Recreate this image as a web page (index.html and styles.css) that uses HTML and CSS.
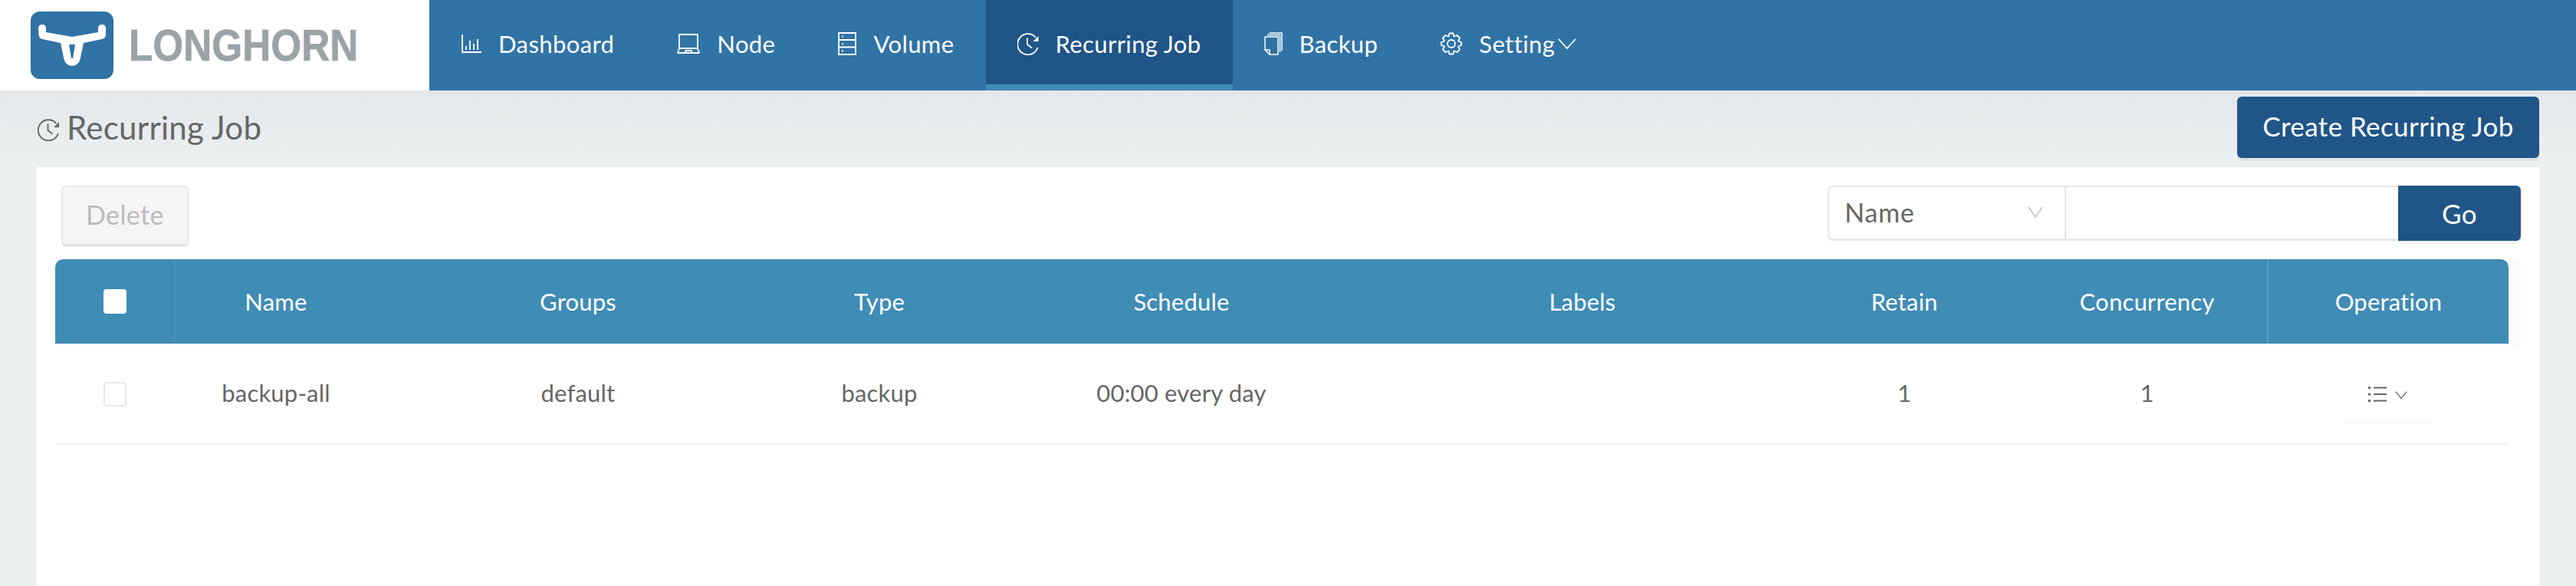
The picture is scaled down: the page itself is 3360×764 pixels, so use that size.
FILE: index.html
```html
<!DOCTYPE html>
<html lang="en">
<head>
<meta charset="utf-8">
<title>Longhorn - Recurring Job</title>
<link rel="stylesheet" href="styles.css">
</head>
<body>
<header class="topbar">
  <div class="brand">
    <svg class="brand-mark" viewBox="0 0 108 88" aria-hidden="true">
      <rect width="108" height="88" rx="12" fill="#3073a5"/>
      <path d="M10 22Q10 17 15 17Q20 17 20 22L20 27L54 33L88 27L88 22Q88 17 93 17Q98 17 98 22L98 30Q98 35 93 36L69 41L65 60Q63 71 54 71Q45 71 43 60L39 41L15 36Q11 35 10.500 30Z" fill="#fff"/>
      <path d="M50 43H58L55 61H53Z" fill="#3073a5"/>
    </svg>
    <span class="brand-name">LONGHORN</span>
  </div>
  <nav class="nav">
    <a class="nav-item">
      <svg class="nav-icon icon-dash" viewBox="0 0 26 24" aria-hidden="true"><path d="M1 0V23H26M6 20V15M11 20V8M16 20V12M21 20V6" fill="none" stroke="#fff" stroke-width="1.800"/></svg>
      Dashboard
    </a>
    <a class="nav-item">
      <svg class="nav-icon icon-node" viewBox="0 0 30 26" aria-hidden="true"><path d="M3 19V1H27V19M1 25L3 19H27L29 25ZM11 24.500V22H19V24.500" fill="none" stroke="#fff" stroke-width="1.800" stroke-linejoin="round"/></svg>
      Node
    </a>
    <a class="nav-item">
      <svg class="nav-icon icon-volume" viewBox="0 0 24 30" aria-hidden="true"><path d="M1 1H23V29H1ZM1 10H23M1 19.500H23M5 5.500H7M5 15H7M5 24.500H7" fill="none" stroke="#fff" stroke-width="1.800"/></svg>
      Volume
    </a>
    <a class="nav-item is-active">
      <svg class="nav-icon icon-clock" viewBox="0 0 28 30" aria-hidden="true"><path d="M24 7A13.500 13.500 0 1 0 26.500 20M13 7.500V16L19 20.500" fill="none" stroke="#fff" stroke-width="1.800"/><path d="M27.500 5V12H20.500Z" fill="#fff"/></svg>
      Recurring Job
    </a>
    <a class="nav-item">
      <svg class="nav-icon icon-backup" viewBox="0 0 24 30" aria-hidden="true"><path d="M1 6H18V29H7L1 23ZM1 23H7V29M4 3.500H20.500V26M6.500 1H23V24" fill="none" stroke="#fff" stroke-width="1.500" stroke-linejoin="round"/></svg>
      Backup
    </a>
    <a class="nav-item">
      <svg class="nav-icon icon-gear" viewBox="0 0 28 30" aria-hidden="true"><circle cx="14" cy="15" r="5" fill="none" stroke="#fff" stroke-width="1.800"/><path d="M11.500 1.500H16.500L17.500 5.500L21.500 4L25 7.500L23 11.500L27 13V17L23 18.500L25 22.500L21.500 26L17.500 24.500L16.500 28.500H11.500L10.500 24.500L6.500 26L3 22.500L5 18.500L1 17V13L5 11.500L3 7.500L6.500 4L10.500 5.500Z" fill="none" stroke="#fff" stroke-width="1.800" stroke-linejoin="round"/></svg>
      <span class="setting-label">Setting<svg class="nav-chevron" viewBox="0 0 24 14" aria-hidden="true"><path d="M1 1L12 13L23 1" fill="none" stroke="#fff" stroke-width="1.800"/></svg></span>
    </a>
  </nav>
</header>
<main class="page">
  <div class="page-head">
    <h1 class="page-title">
      <svg class="title-icon" viewBox="0 0 28 30" aria-hidden="true"><path d="M24 7A13.500 13.500 0 1 0 26.500 20M13 7.500V16L19 20.500" fill="none" stroke="#666" stroke-width="1.900"/><path d="M27.500 5V12H20.500Z" fill="#666"/></svg>
      Recurring Job
    </h1>
    <button class="btn btn-primary btn-create">Create Recurring Job</button>
  </div>
  <section class="panel">
    <div class="toolbar">
      <button class="btn btn-disabled">Delete</button>
      <div class="filter">
        <div class="filter-select">
          <span>Name</span>
          <svg class="select-arrow" viewBox="0 0 20 15" aria-hidden="true"><path d="M1 1L10 14L19 1" fill="none" stroke="#bfbfbf" stroke-width="1.500"/></svg>
        </div>
        <div class="filter-input"></div>
        <button class="btn btn-primary btn-go">Go</button>
      </div>
    </div>
    <div class="table">
      <div class="table-row table-head">
        <div class="cell cell-divider-right"><span class="checkbox checkbox-head"></span></div>
        <div class="cell">Name</div>
        <div class="cell">Groups</div>
        <div class="cell">Type</div>
        <div class="cell">Schedule</div>
        <div class="cell">Labels</div>
        <div class="cell">Retain</div>
        <div class="cell">Concurrency</div>
        <div class="cell cell-divider-left">Operation</div>
      </div>
      <div class="table-row table-body-row">
        <div class="cell"><span class="checkbox checkbox-row"></span></div>
        <div class="cell">backup-all</div>
        <div class="cell">default</div>
        <div class="cell">backup</div>
        <div class="cell">00:00 every day</div>
        <div class="cell"></div>
        <div class="cell">1</div>
        <div class="cell">1</div>
        <div class="cell">
          <span class="op-button">
            <svg class="op-list" viewBox="0 0 24 20" aria-hidden="true"><path d="M7 1.500H24M7 10H24M7 18.500H24" fill="none" stroke="#666" stroke-width="2"/><path d="M0 1.500H3M0 10H3M0 18.500H3" fill="none" stroke="#666" stroke-width="3"/></svg>
            <svg class="op-chevron" viewBox="0 0 18 12" aria-hidden="true"><path d="M1 1L9 11L17 1" fill="none" stroke="#666" stroke-width="1.500"/></svg>
          </span>
        </div>
      </div>
    </div>
  </section>
</main>
</body>
</html>
```
FILE: styles.css
```css
* { box-sizing: border-box; }
html, body { margin: 0; height: 100%; }
body {
  font-family: Lato, "Open Sans", "Liberation Sans", sans-serif;
  font-size: 31px;
  color: #666;
  background: #ecf0f1;
  overflow: hidden;
}
.topbar { display: flex; height: 118px; background: #3073a5; }
.brand {
  display: flex;
  align-items: center;
  gap: 20px;
  width: 560px;
  padding-left: 40px;
  background: #fff;
}
.brand-mark { width: 108px; height: 88px; flex: none; }
.brand-name {
  font-family: "Liberation Sans", sans-serif;
  font-weight: 700;
  font-size: 58px;
  line-height: 1;
  color: #9ca3a6;
  -webkit-text-stroke: 0.7px #9ca3a6;
  transform: scaleX(0.885);
  transform-origin: left center;
}
.nav { display: flex; padding-left: 1px; }
.nav-item {
  display: flex;
  align-items: center;
  gap: 22px;
  padding: 4px 41px 0;
  color: #fff;
  letter-spacing: 0.4px;
  border-bottom: 8px solid transparent;
}
.nav-item.is-active { background: #205588; border-bottom-color: #3f8cb5; }
.nav-icon { flex: none; }
.icon-dash { width: 26px; height: 24px; }
.icon-node { width: 30px; height: 26px; }
.icon-volume { width: 24px; height: 30px; }
.icon-clock { width: 28px; height: 30px; }
.icon-backup { width: 24px; height: 30px; }
.icon-gear { width: 28px; height: 30px; }
.setting-label { display: flex; align-items: center; gap: 4px; }
.nav-chevron { width: 24px; height: 14px; }

.page { height: 646px; }
.page-head {
  display: flex;
  justify-content: space-between;
  align-items: flex-start;
  height: 100px;
  padding: 8px 48px 0 48px;
  background: linear-gradient(#e4e8ea, #ecf0f1);
}
.page-title {
  display: flex;
  align-items: center;
  gap: 9px;
  margin: 0;
  height: 80px;
  font-size: 42px;
  letter-spacing: 0.300px;
  font-weight: 400;
  color: #666;
}
.title-icon { width: 29px; height: 30px; margin: 6px 0 0 1px; }
.btn {
  font-family: inherit;
  font-size: 35px;
  letter-spacing: 0.400px;
  border: 0;
  border-radius: 6px;
  padding: 0;
}
.btn-primary { color: #fff; background: #205588; }
.btn-create {
  width: 394px;
  height: 80px;
  padding-bottom: 4px;
  box-shadow: 0 4px 0 #e0e4e6;
}
.panel {
  height: 546px;
  margin: 0 48px;
  padding: 24px 24px 0;
  background: #fff;
}
.toolbar {
  display: flex;
  justify-content: space-between;
  align-items: flex-start;
  height: 96px;
  padding: 0 0 0 8px;
}
.btn-disabled {
  width: 166px;
  height: 80px;
  padding-bottom: 4px;
  font-size: 34px;
  color: #bbb;
  background: #f5f5f5;
  border: 2px solid #e6e6e6;
  border-bottom-width: 4px;
}
.filter { display: flex; height: 72px; width: 904px; }
.filter-select {
  display: flex;
  align-items: center;
  justify-content: space-between;
  width: 309px;
  padding: 0 28px 3px 20px;
  font-size: 34px;
  letter-spacing: 0.800px;
  border: 2px solid #e6e6e6;
  border-right: 0;
  border-bottom-width: 3px;
  border-radius: 6px 0 0 6px;
}
.select-arrow { width: 20px; height: 15px; }
.filter-input {
  width: 435px;
  border: 2px solid #e6e6e6;
  border-right: 0;
  border-bottom-width: 3px;
}
.btn-go {
  width: 160px;
  border-radius: 0 6px 6px 0;
  box-shadow: 0 4px 0 #f3f3f3;
}
.table { width: 3216px; letter-spacing: 0.200px; }
.table-row {
  display: grid;
  grid-template-columns: 156px 264px 524px 262px 526px 520px 320px 313px 315px 16px;
}
.table-head {
  height: 112px;
  color: #fff;
  background: linear-gradient(#f3f3f3, #f3f3f3) 0 100% / 3200px 2px no-repeat, linear-gradient(#fafafa, #fafafa) 100% 0 / 16px 112px no-repeat;
}
.table-head .cell { height: 110px; background: #3f8cb5; }
.table-head .cell:first-child { border-top-left-radius: 10px; }
.table-head .cell:nth-child(9) { border-top-right-radius: 10px; }
.table-body-row {
  width: 3200px;
  height: 130px;
  border-bottom: 2px solid #f3f3f3;
  grid-template-columns: 156px 264px 524px 262px 526px 520px 320px 313px 315px;
}
.table-body-row .cell { padding-bottom: 4px; }
.cell { display: flex; align-items: center; justify-content: center; }
.cell-divider-right { border-right: 1px solid #5a9cc0; }
.cell-divider-left { border-left: 2px solid #5a9cc0; }
.checkbox {
  display: block;
  width: 30px;
  height: 32px;
  background: #fff;
  border: 2px solid #e8e8e8;
  border-radius: 4px;
}
.checkbox-head { border-color: #fff; }
.checkbox-row { margin-top: 4px; }
.op-button {
  display: flex;
  align-items: center;
  justify-content: center;
  gap: 11px;
  width: 118px;
  height: 70px;
  padding-bottom: 4px;
  margin-top: 12px;
  border-bottom: 4px solid #fafafa;
  border-radius: 6px;
}
.op-list { width: 24px; height: 20px; }
.op-chevron { width: 16px; height: 12px; margin-top: 2px; }
```
